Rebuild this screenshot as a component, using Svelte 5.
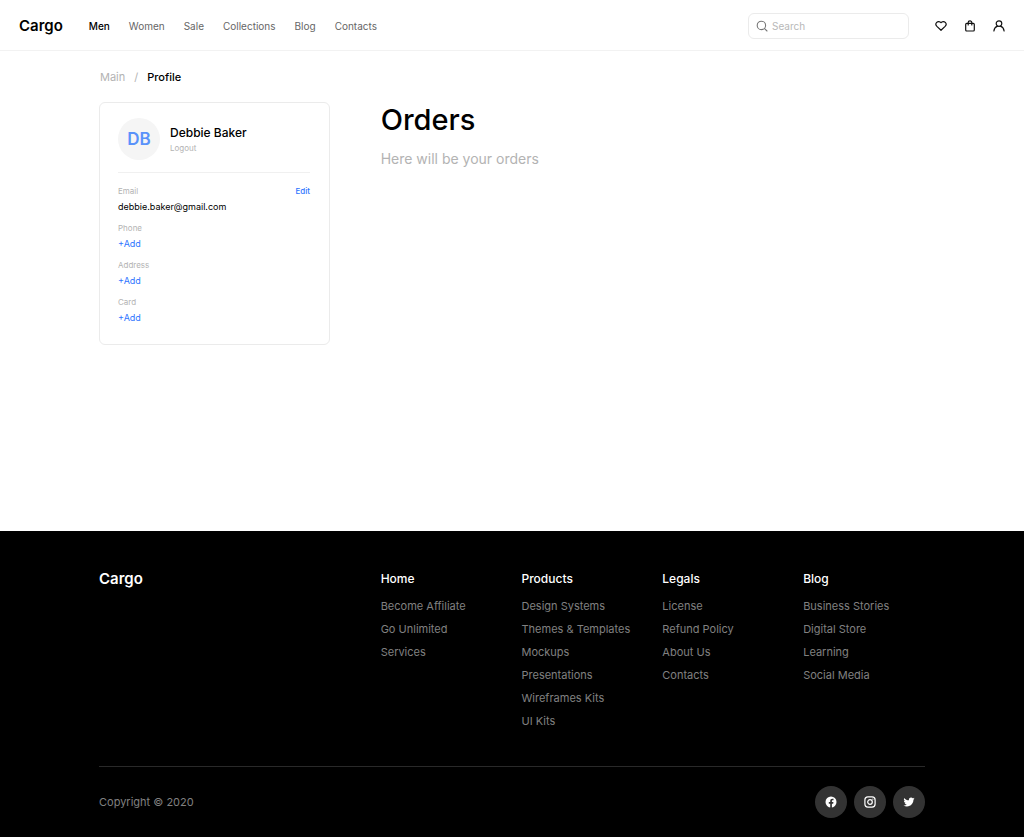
<script>
  const nav = ['Men', 'Women', 'Sale', 'Collections', 'Blog', 'Contacts'];
  const missing = ['Phone', 'Address', 'Card'];
  const groups = [
    { title: 'Home', links: ['Become Affiliate', 'Go Unlimited', 'Services'] },
    {
      title: 'Products',
      links: ['Design Systems', 'Themes & Templates', 'Mockups', 'Presentations', 'Wireframes Kits', 'UI Kits']
    },
    { title: 'Legals', links: ['License', 'Refund Policy', 'About Us', 'Contacts'] },
    { title: 'Blog', links: ['Business Stories', 'Digital Store', 'Learning', 'Social Media'] }
  ];
</script>

<div class="page">
  <header class="topbar">
    <a class="brand" href="#home">Cargo</a>
    <nav class="menu" aria-label="Primary">
      {#each nav as item, i}
        <a href="#{item.toLowerCase()}" class:active={i === 0}>{item}</a>
      {/each}
    </nav>
    <label class="search">
      <svg viewBox="0 0 12 12" width="12" height="12" fill="none" stroke="#777" stroke-width="1.1" stroke-linecap="round" aria-hidden="true">
        <circle cx="5.4" cy="5.4" r="4.2" />
        <path d="M8.6 8.6 11 11" />
      </svg>
      <input type="search" placeholder="Search" aria-label="Search" />
    </label>
    <div class="actions">
      <button type="button" aria-label="Favorites">
        <svg viewBox="0 0 12 12" width="12" height="12" fill="none" stroke="#111" stroke-width="1.2" stroke-linejoin="round">
          <path d="M6 10.300 1.900 6.400C.7 5.200.7 3.400 1.700 2.400 2.900 1.200 4.900 1.300 6 2.700 7.100 1.300 9.100 1.200 10.300 2.400 11.300 3.400 11.300 5.200 10.100 6.400Z" />
        </svg>
      </button>
      <button type="button" aria-label="Shopping bag">
        <svg viewBox="0 0 12 12" width="12" height="12" fill="none" stroke="#111" stroke-width="1.2" stroke-linejoin="round" stroke-linecap="round">
          <rect x="1.7" y="3.400" width="8.600" height="7.600" rx="1" />
          <path d="M4.200 5V2.600a1.800 1.800 0 0 1 3.600 0V5" />
        </svg>
      </button>
      <button type="button" aria-label="Account">
        <svg viewBox="0 0 12 12" width="12" height="12" fill="none" stroke="#111" stroke-width="1.2" stroke-linecap="round">
          <circle cx="6" cy="3.600" r="2.800" />
          <path d="M.9 11C1.200 8.400 2.600 6.800 4.500 6.100M7.500 6.100C9.400 6.800 10.800 8.400 11.100 11" />
        </svg>
      </button>
    </div>
  </header>

  <main class="container">
    <nav class="crumbs" aria-label="Breadcrumb">
      <a href="#main">Main</a>
      <span>/</span>
      <span class="current" aria-current="page">Profile</span>
    </nav>

    <div class="columns">
      <aside class="card">
        <div class="person">
          <div class="avatar">DB</div>
          <div>
            <h2>Debbie Baker</h2>
            <a class="logout" href="#logout">Logout</a>
          </div>
        </div>
        <dl>
          <div class="field">
            <dt>Email <button type="button" class="edit">Edit</button></dt>
            <dd>debbie.baker@gmail.com</dd>
          </div>
          {#each missing as name}
            <div class="field">
              <dt>{name}</dt>
              <dd><button type="button" aria-label="Add {name.toLowerCase()}">+Add</button></dd>
            </div>
          {/each}
        </dl>
      </aside>
      <section class="orders">
        <h1>Orders</h1>
        <p>Here will be your orders</p>
      </section>
    </div>
  </main>

  <footer>
    <div class="container">
      <div class="columns sitemap">
        <a class="brand" href="#home">Cargo</a>
        {#each groups as group}
          <section>
            <h3>{group.title}</h3>
            <ul>
              {#each group.links as link}
                <li><a href="#{group.title.toLowerCase()}">{link}</a></li>
              {/each}
            </ul>
          </section>
        {/each}
      </div>
      <div class="legal">
        <span>Copyright © 2020</span>
        <div class="social">
          <a href="#facebook" aria-label="Facebook">
            <svg viewBox="0 0 12 12" width="12" height="12">
              <circle cx="6" cy="6" r="5.500" fill="#fff" />
              <path d="M5.200 12V7.700H3.800V6.100h1.400V4.900C5.200 3.500 6 2.700 7.300 2.700l1.200.1v1.400h-.7c-.7 0-.9.4-.9.9v1h1.500l-.2 1.600H6.900V12Z" fill="#333" />
            </svg>
          </a>
          <a href="#instagram" aria-label="Instagram">
            <svg viewBox="0 0 12 12" width="12" height="12" fill="none" stroke="#fff" stroke-width="1.200">
              <rect x=".9" y=".9" width="10.200" height="10.200" rx="3" />
              <circle cx="6" cy="6" r="2.300" />
              <circle cx="8.900" cy="3.100" r=".7" fill="#fff" stroke="none" />
            </svg>
          </a>
          <a href="#twitter" aria-label="Twitter">
            <svg viewBox="-1 -1 26 26" width="12" height="12" fill="#fff">
              <path d="M23.950 4.570a10 10 0 0 1-2.820.77 4.960 4.960 0 0 0 2.160-2.720 9.900 9.900 0 0 1-3.120 1.180 4.920 4.920 0 0 0-8.390 4.490C7.690 8.100 4.070 6.130 1.640 3.160a4.920 4.920 0 0 0 1.520 6.570 4.900 4.900 0 0 1-2.230-.61v.06a4.920 4.920 0 0 0 3.950 4.830 5 5 0 0 1-2.210.08 4.940 4.940 0 0 0 4.600 3.420A9.870 9.870 0 0 1 0 19.540a13.990 13.990 0 0 0 7.550 2.210c9.050 0 14-7.500 14-13.980 0-.21 0-.42-.02-.63a9.940 9.940 0 0 0 2.420-2.570Z" />
            </svg>
          </a>
        </div>
      </div>
    </div>
  </footer>
</div>

<style>
  :global(body) {
    margin: 0;
    background: #fff;
  }
  .page {
    min-height: 100vh;
    display: flex;
    flex-direction: column;
    font-family: Inter, 'Liberation Sans', sans-serif;
    font-size: 11px;
    line-height: 16px;
    color: #000;
  }
  .page * {
    box-sizing: border-box;
  }
  a {
    color: inherit;
    text-decoration: none;
  }
  button {
    padding: 0;
    border: 0;
    background: none;
    font: inherit;
    color: #2e75ff;
    cursor: pointer;
  }
  svg {
    display: block;
  }
  h1, h2, h3, p, ul, dl, dd {
    margin: 0;
    padding: 0;
  }
  .brand {
    font-size: 15px;
    line-height: 20px;
    font-weight: 600;
  }
  .topbar {
    display: flex;
    align-items: center;
    padding: 13px 19px 11px;
    border-bottom: 1px solid #f2f2f2;
    font-size: 10px;
  }
  .menu {
    display: flex;
    gap: 19px;
    margin-left: 26px;
    color: #666;
  }
  .menu .active {
    color: #000;
    font-weight: 500;
  }
  .search {
    display: flex;
    align-items: center;
    gap: 4px;
    width: 161px;
    height: 26px;
    margin-left: auto;
    padding: 0 7px;
    border: 1px solid #ebebeb;
    border-radius: 6px;
  }
  .search input {
    flex: 1;
    min-width: 0;
    padding: 0;
    border: 0;
    outline: 0;
    background: none;
    font: inherit;
  }
  .search input::placeholder {
    color: #b8b8b8;
  }
  .actions {
    display: flex;
    gap: 17px;
    margin-left: 26px;
  }
  .container {
    width: 100%;
    padding: 0 99px;
  }
  .columns {
    display: grid;
    grid-template-columns: repeat(6, minmax(0, 1fr));
    column-gap: 19px;
    align-items: start;
  }
  main {
    flex: 1;
  }
  .crumbs {
    display: flex;
    gap: 9px;
    padding: 18px 1px 17px;
    color: #b3b3b3;
  }
  .crumbs .current {
    color: #000;
    font-weight: 500;
  }
  .card {
    grid-column: span 2;
    max-width: 231px;
    padding: 15px 19px 16px 18px;
    border: 1px solid #ebebeb;
    border-radius: 6px;
  }
  .person {
    display: flex;
    align-items: center;
    gap: 10px;
    padding-bottom: 12px;
    border-bottom: 1px solid #f0f0f0;
  }
  .avatar {
    display: grid;
    place-items: center;
    width: 42px;
    height: 42px;
    border-radius: 50%;
    background: #f5f5f5;
    color: #5a92fa;
    font-size: 17px;
    font-weight: 600;
  }
  h2 {
    font-size: 12px;
    line-height: 18px;
    font-weight: 500;
  }
  .logout {
    display: block;
    font-size: 8px;
    line-height: 12px;
    color: #b3b3b3;
  }
  dl {
    display: grid;
    gap: 5px;
    padding-top: 12px;
  }
  dt {
    display: flex;
    justify-content: space-between;
    font-size: 8px;
    line-height: 12px;
    color: #b3b3b3;
  }
  .edit {
    font-weight: 500;
  }
  dd {
    font-size: 9px;
    line-height: 20px;
  }
  dd button {
    display: block;
  }
  .orders {
    grid-column: span 4;
  }
  h1 {
    font-size: 29px;
    line-height: 36px;
    font-weight: 500;
  }
  .orders p {
    margin-top: 9px;
    font-size: 14px;
    line-height: 24px;
    color: #b3b3b3;
  }
  footer {
    background: #000;
    color: #808080;
  }
  footer .brand {
    grid-column: span 2;
    color: #fff;
  }
  .sitemap {
    padding: 38px 0 33px;
  }
  h3 {
    font-size: 12px;
    line-height: 20px;
    font-weight: 500;
    color: #fff;
  }
  ul {
    margin-top: 6px;
    list-style: none;
    line-height: 23px;
    white-space: nowrap;
  }
  .legal {
    display: flex;
    align-items: center;
    justify-content: space-between;
    padding: 19px 0;
    border-top: 1px solid #292929;
  }
  .social {
    display: flex;
    gap: 7px;
  }
  .social a {
    display: grid;
    place-items: center;
    width: 32px;
    height: 32px;
    border-radius: 50%;
    background: #333;
  }
</style>
